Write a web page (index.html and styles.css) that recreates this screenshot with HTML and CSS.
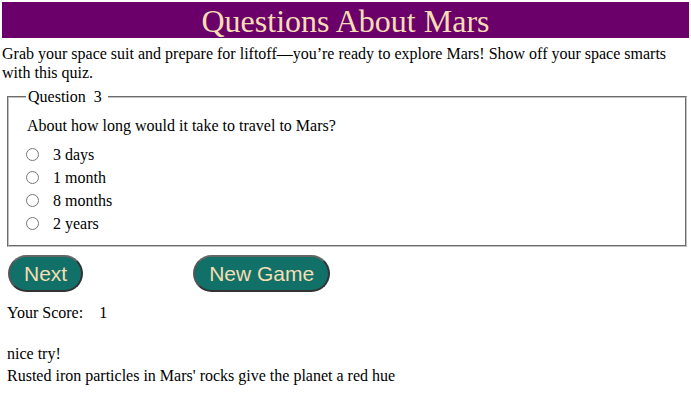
FILE: index.html
```html
<!DOCTYPE html>
<html>
<head>
<meta charset="utf-8">
<link rel="stylesheet" href="styles.css">
</head>
<body>
<h1 class="title">Questions About Mars</h1>
<p class="intro">Grab your space suit and prepare for liftoff—you’re ready to explore Mars! Show off your space smarts with this quiz.</p>
<fieldset class="quiz">
  <legend class="legend">Question&nbsp; 3</legend>
  <p class="question">About how long would it take to travel to Mars?</p>
  <div class="options">
    <label class="option"><input type="radio" name="a" class="radio"><span>3 days</span></label>
    <label class="option"><input type="radio" name="a" class="radio"><span>1 month</span></label>
    <label class="option"><input type="radio" name="a" class="radio"><span>8 months</span></label>
    <label class="option"><input type="radio" name="a" class="radio"><span>2 years</span></label>
  </div>
</fieldset>
<div class="buttons">
  <button class="btn">Next</button>
  <button class="btn btn-new">New Game</button>
</div>
<p class="score">Your Score:&nbsp;&nbsp;&nbsp; 1</p>
<p class="feedback">nice try!</p>
<p class="fact">Rusted iron particles in Mars' rocks give the planet a red hue</p>
</body>
</html>
```
FILE: styles.css
```css
body {
  margin: 2px;
  font-family: "Liberation Serif", "Times New Roman", serif;
  font-size: 16px;
  color: #000;
  background: #fff;
}
.title {
  margin: 0;
  height: 36px;
  line-height: 38px;
  background: #6b006b;
  color: #f5deb3;
  font-weight: normal;
  font-size: 32px;
  text-align: center;
}
.intro {
  margin: 6px 0 6px;
  line-height: 19px;
}
.quiz {
  margin: 0 2px 0 5px;
  border: 2px groove #c0c0c0;
  padding: 4px 16px 10px 18px;
}
.legend {
  padding: 0 6px 0 2px;
  margin-left: -1px;
}
.question {
  margin: 7px 0 8px;
}
.options {
  display: flex;
  flex-direction: column;
}
.option {
  display: flex;
  align-items: center;
  height: 23px;
}
.radio {
  margin: 0 14px 0 -1px;
  width: 13px;
  height: 13px;
}
.buttons {
  display: flex;
  gap: 110px;
  margin: 8px 0 0 6px;
}
.btn {
  font-family: "Liberation Sans", Arial, sans-serif;
  font-size: 21px;
  color: #f5deb3;
  background: #117068;
  border: 2px solid #333;
  border-top-color: #666;
  border-left-color: #555;
  border-radius: 20px;
  height: 37px;
  padding: 0 14px;
}
.score {
  margin: 12px 0 0 5px;
}
.feedback {
  margin: 23px 0 0 5px;
}
.fact {
  margin: 4px 0 0 5px;
}
```
